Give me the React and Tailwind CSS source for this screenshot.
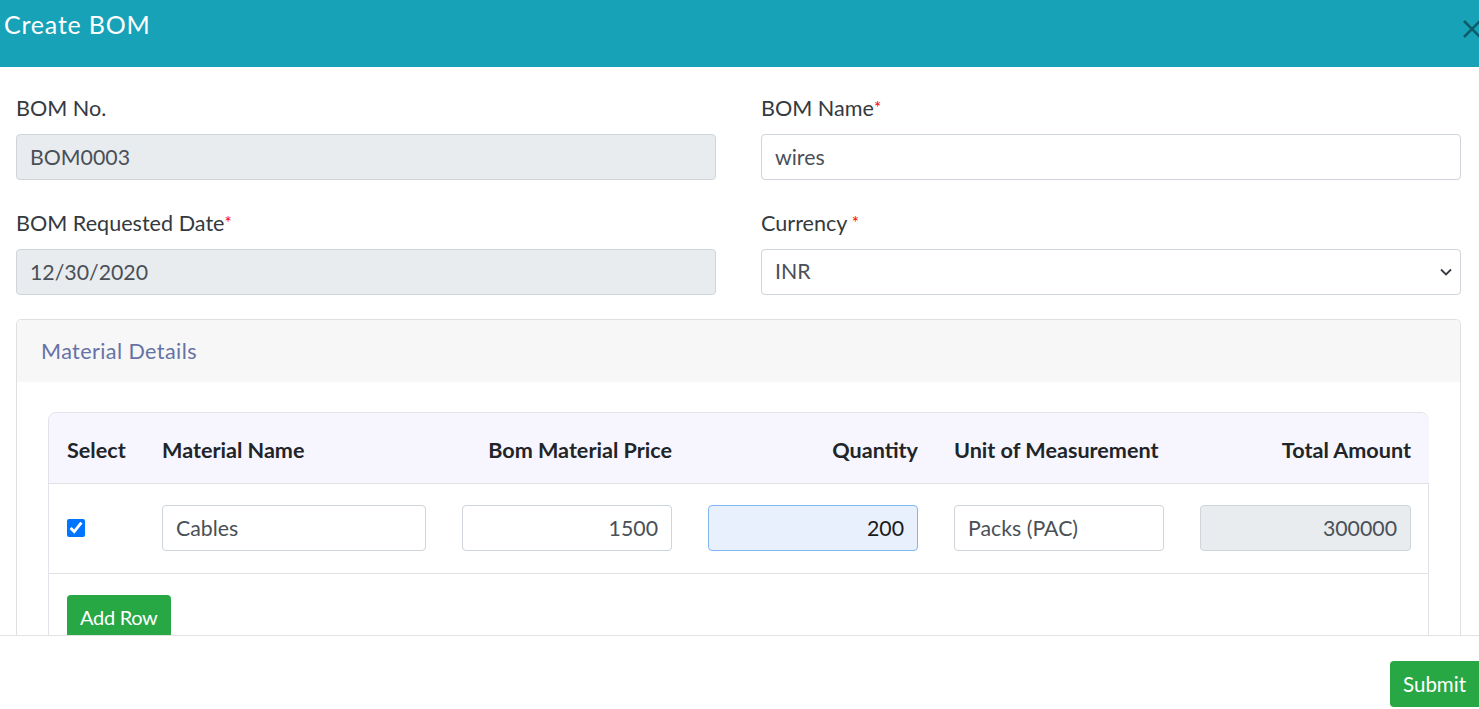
import React, { useState } from 'react';

const inputBase =
  'w-full h-[46px] px-[13px] rounded-[4px] border border-[#ced4da] text-[21.3px] text-[#495057] outline-none';

const Label = ({ children, required, spaced }) => (
  <label className="block text-[21.6px] leading-[30px] text-[#343a40] mb-[11px]">
    {children}
    {required && <span className="text-[#ff0000] text-[17px] align-top">{spaced ? ' *' : '*'}</span>}
  </label>
);

const App = () => {
  const [checked, setChecked] = useState(true);

  return (
    <div
      className="w-[1479px] h-[709px] overflow-hidden bg-white flex flex-col"
      style={{ fontFamily: 'Lato, "Open Sans", sans-serif' }}
    >
      {/* header */}
      <div className="h-[67px] shrink-0 bg-[#18a2b8] flex items-start justify-between">
        <h1 className="pl-[4px] pt-[8px] text-[25px] leading-[32px] tracking-[0.8px] text-white">Create BOM</h1>
        <div className="pt-[18px] -mr-[6px]">
          <svg width="24" height="22" viewBox="0 0 24 22" fill="none">
            <path d="M3 3 L19 19 M19 3 L3 19" stroke="#0d5c6a" strokeWidth="2.6" />
          </svg>
        </div>
      </div>

      {/* body */}
      <div className="flex-1 overflow-hidden pl-[16px] pr-[18px] pt-[26px]">
        <div className="grid grid-cols-2 gap-x-[45px]">
          <div className="mb-[28px]">
            <Label>BOM No.</Label>
            <input readOnly value="BOM0003" className={`${inputBase} bg-[#e9ecef]`} />
          </div>
          <div className="mb-[28px]">
            <Label required>BOM Name</Label>
            <input readOnly value="wires" className={`${inputBase} bg-white`} />
          </div>
          <div className="mb-[24px]">
            <Label required>BOM Requested Date</Label>
            <input readOnly value="12/30/2020" className={`${inputBase} bg-[#e9ecef]`} />
          </div>
          <div className="mb-[24px]">
            <Label required spaced>Currency</Label>
            <div className="relative">
              <select className={`${inputBase} bg-white appearance-none`} defaultValue="INR">
                <option>INR</option>
                <option>USD</option>
              </select>
              <svg
                className="absolute right-[8px] top-[17px]"
                width="14"
                height="12"
                viewBox="0 0 14 12"
                fill="none"
              >
                <path d="M2 3.5 L7 8.5 L12 3.5" stroke="#343a40" strokeWidth="1.8" />
              </svg>
            </div>
          </div>
        </div>

        {/* material details card */}
        <div className="border border-[#e0e0e0] rounded-[5px]">
          <div className="h-[62px] bg-[#f7f7f7] flex items-center px-[24px] text-[21.6px] tracking-[0.4px] text-[#6672a6] rounded-t-[5px]">
            Material Details
          </div>
          <div className="px-[31px] pt-[30px] pb-[20px]">
            <div className="border border-[#e2e2ea] rounded-t-[8px]">
              <table className="w-full border-collapse table-fixed">
                <colgroup>
                  <col className="w-[95px]" />
                  <col className="w-[300px]" />
                  <col className="w-[246px]" />
                  <col className="w-[246px]" />
                  <col className="w-[246px]" />
                  <col className="w-[247px]" />
                </colgroup>
                <thead>
                  <tr className="bg-[#f7f6fe] h-[70px] text-[21.6px] font-bold text-[#212529]">
                    <th className="text-left px-[18px] pt-[4px] rounded-tl-[8px]">Select</th>
                    <th className="text-left px-[18px] pt-[4px]">Material Name</th>
                    <th className="text-right px-[18px] pt-[4px]">Bom Material Price</th>
                    <th className="text-right px-[18px] pt-[4px]">Quantity</th>
                    <th className="text-left px-[18px] pt-[4px]">Unit of Measurement</th>
                    <th className="text-right px-[18px] pt-[4px] rounded-tr-[8px]">Total Amount</th>
                  </tr>
                </thead>
                <tbody>
                  <tr className="h-[90px] border-t border-b border-[#e2e2e2]">
                    <td className="px-[18px]">
                      <input
                        type="checkbox"
                        checked={checked}
                        onChange={() => setChecked(!checked)}
                        className="w-[18px] h-[18px] accent-[#0075ff] align-middle -mt-[4px]"
                      />
                    </td>
                    <td className="px-[18px]">
                      <input readOnly value="Cables" className={`${inputBase} bg-white`} />
                    </td>
                    <td className="px-[18px]">
                      <input readOnly value="1500" className={`${inputBase} bg-white text-right`} />
                    </td>
                    <td className="px-[18px]">
                      <input
                        readOnly
                        value="200"
                        className="w-full h-[46px] px-[13px] rounded-[4px] border border-[#80b7f0] bg-[#e8f0fe] text-[21.3px] text-[#1a1a1a] text-right outline-none"
                      />
                    </td>
                    <td className="px-[18px]">
                      <input readOnly value="Packs (PAC)" className={`${inputBase} bg-white`} />
                    </td>
                    <td className="px-[18px]">
                      <input readOnly value="300000" className={`${inputBase} bg-[#e9ecef] text-right`} />
                    </td>
                  </tr>
                </tbody>
              </table>
              <div className="px-[18px] pt-[21px] pb-[20px]">
                <button className="h-[48px] px-[13px] rounded-[4px] bg-[#28a745] text-white text-[20px] tracking-[-0.3px] pb-[4px]">
                  Add Row
                </button>
              </div>
            </div>
          </div>
        </div>
      </div>

      {/* footer */}
      <div className="h-[74px] shrink-0 border-t border-[#e2e2e2] flex items-start justify-end pt-[25px]">
        <button className="h-[46px] px-[13px] rounded-l-[4px] bg-[#28a745] text-white text-[20.5px]">Submit</button>
      </div>
    </div>
  );
};

export default App;
